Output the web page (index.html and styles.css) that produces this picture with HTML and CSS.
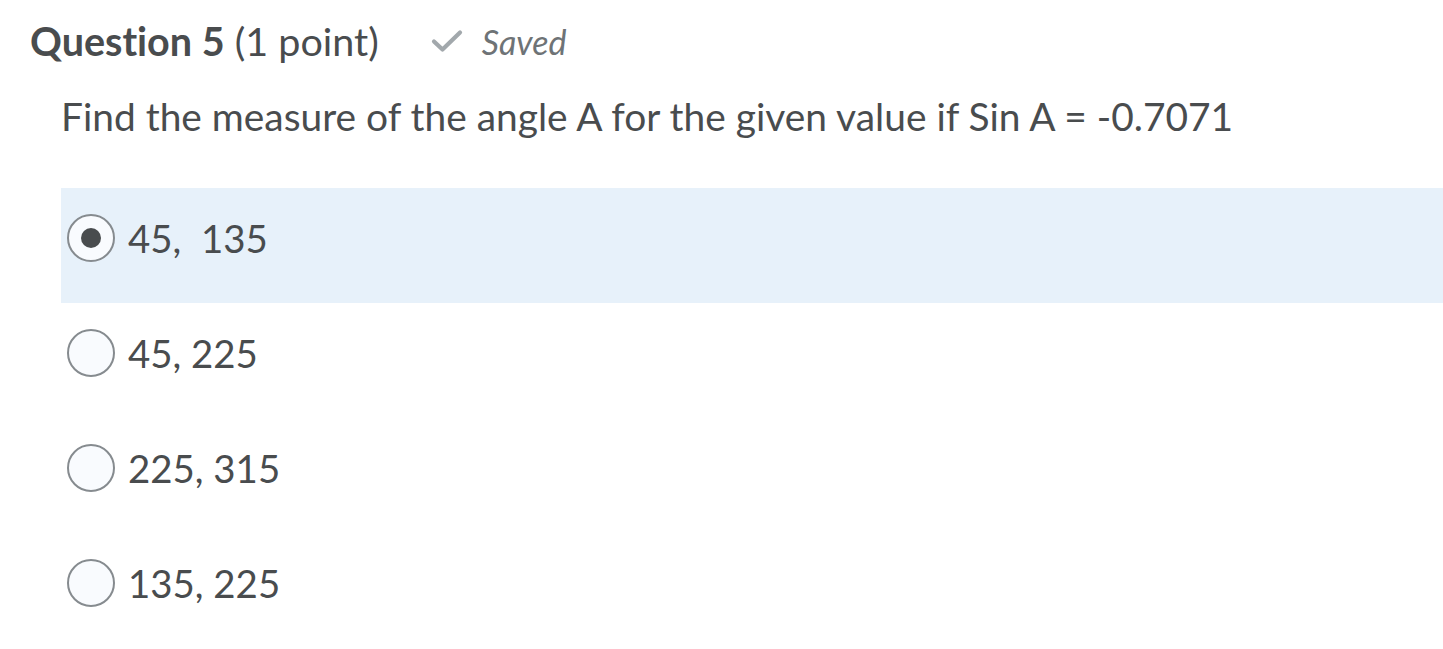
FILE: index.html
```html
<!DOCTYPE html>
<html lang="en">
<head>
<meta charset="utf-8">
<title>Question 5</title>
<link rel="stylesheet" href="styles.css">
</head>
<body>
<div class="quiz">
  <div class="q-header">
    <h2 class="q-title"><strong>Question 5</strong> (1 point)</h2>
    <div class="saved">
      <svg class="check" width="32" height="24" viewBox="0 0 32 24" aria-hidden="true">
        <path d="M3 12.5 L11.5 20.5 L29 3.5" fill="none" stroke="#a2a8ac" stroke-width="4.2" stroke-linecap="round" stroke-linejoin="round"/>
      </svg>
      <span class="saved-text">Saved</span>
    </div>
  </div>
  <div class="q-body">
    <p class="q-text">Find the measure of the angle A for the given value if Sin A = -0.7071</p>
    <div class="options">
      <label class="option selected">
        <span class="radio"><span class="dot"></span></span>
        <span class="opt-text">45,&nbsp; 135</span>
      </label>
      <label class="option">
        <span class="radio"></span>
        <span class="opt-text">45, 225</span>
      </label>
      <label class="option">
        <span class="radio"></span>
        <span class="opt-text">225, 315</span>
      </label>
      <label class="option">
        <span class="radio"></span>
        <span class="opt-text">135, 225</span>
      </label>
    </div>
  </div>
</div>
</body>
</html>
```

FILE: styles.css
```css
* { box-sizing: border-box; }
html, body {
  margin: 0;
  padding: 0;
  background: #ffffff;
}
body {
  font-family: Lato, "Noto Sans", "Liberation Sans", sans-serif;
  color: #494c4e;
  font-variant-ligatures: none;
  font-feature-settings: "liga" 0, "dlig" 0, "clig" 0;
}
.quiz {
  padding: 16px 0 0 30px;
}
.q-header {
  display: flex;
  align-items: center;
  height: 50px;
}
.q-title {
  margin: 0;
  font-size: 39.5px;
  font-weight: 400;
  line-height: 50px;
  color: #494c4e;
}
.q-title strong {
  font-weight: 700;
}
.saved {
  display: flex;
  align-items: center;
  margin-left: 52px;
}
.check {
  display: block;
  margin-right: 19px;
}
.saved-text {
  font-style: italic;
  font-size: 34px;
  color: #6e7376;
}
.q-body {
  padding-left: 31px;
}
.q-text {
  margin: 25px 0 0 0;
  font-size: 38.9px;
  line-height: 50px;
  color: #494c4e;
}
.options {
  margin-top: 47px;
}
.option {
  display: flex;
  align-items: flex-start;
  height: 115px;
  padding: 26px 0 0 6px;
}
.option.selected {
  background: #e7f1fa;
}
.radio {
  width: 48px;
  height: 48px;
  border-radius: 50%;
  border: 2px solid #868b8f;
  background: #f9fbfe;
  display: flex;
  align-items: center;
  justify-content: center;
  flex: none;
}
.dot {
  width: 20px;
  height: 20px;
  border-radius: 50%;
  background: #494c4e;
}
.opt-text {
  margin-left: 13px;
  font-size: 38.4px;
  line-height: 48px;
  color: #494c4e;
}
```
